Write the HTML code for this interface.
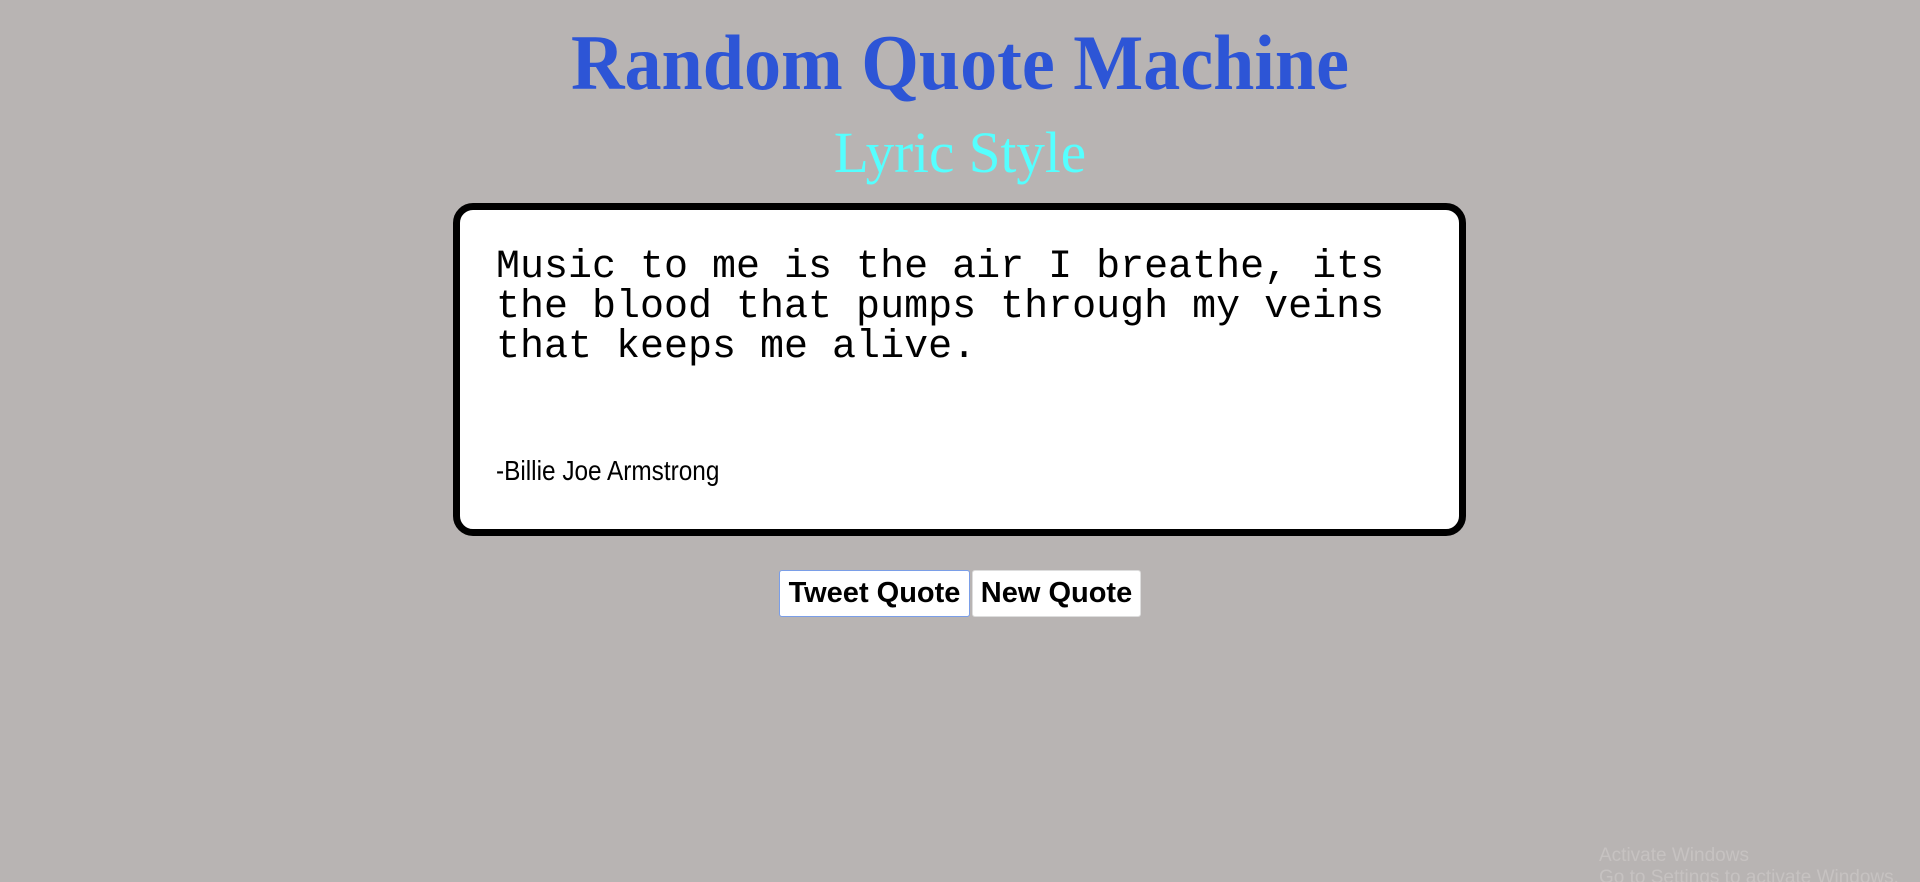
<!DOCTYPE html>
<html><head><meta charset="utf-8"><style>
html,body{margin:0;padding:0;width:1920px;height:882px;background:#b8b4b3;overflow:hidden;position:relative}
.t{position:absolute;left:0;width:1920px;text-align:center;font-family:"Liberation Serif",serif;white-space:nowrap}
#title{top:13px;font-size:78px;font-weight:bold;color:#2d55d6;line-height:100px;transform:scaleX(0.95)}
#sub{top:118px;font-size:58px;color:#55ffff;line-height:70px;transform:scaleX(0.985)}
#box{position:absolute;left:453px;top:203px;width:999px;height:319px;border:7px solid #000;border-radius:20px;background:#fff}
#q{position:absolute;left:36px;top:38px;font-family:"Liberation Mono",monospace;font-size:40px;line-height:40px;color:#000;white-space:pre}
#a{position:absolute;left:36px;top:245px;font-family:"Liberation Sans",sans-serif;font-size:28px;color:#000;transform:scaleX(0.87);transform-origin:left;white-space:nowrap}
.b{position:absolute;top:570px;height:47px;background:#fff;border-radius:3px;font-family:"Liberation Sans",sans-serif;font-weight:bold;font-size:29px;line-height:45px;text-align:center;color:#000;box-sizing:border-box}
#tw{left:779px;width:191px;border:1px solid #7a9ee8}
#nq{left:972px;width:169px;border:1px solid #ddd}
#win{position:absolute;left:1599px;top:845px;font-family:"Liberation Sans",sans-serif;font-size:19px;color:#c6c2c1;line-height:22px}
</style></head><body>
<div class="t" id="title">Random Quote Machine</div>
<div class="t" id="sub">Lyric Style</div>
<div id="box">
<div id="q">Music to me is the air I breathe, its
the blood that pumps through my veins
that keeps me alive.</div>
<div id="a">-Billie Joe Armstrong</div>
</div>
<div class="b" id="tw">Tweet Quote</div>
<div class="b" id="nq">New Quote</div>
<div id="win">Activate Windows<br>Go to Settings to activate Windows.</div>
</body></html>
